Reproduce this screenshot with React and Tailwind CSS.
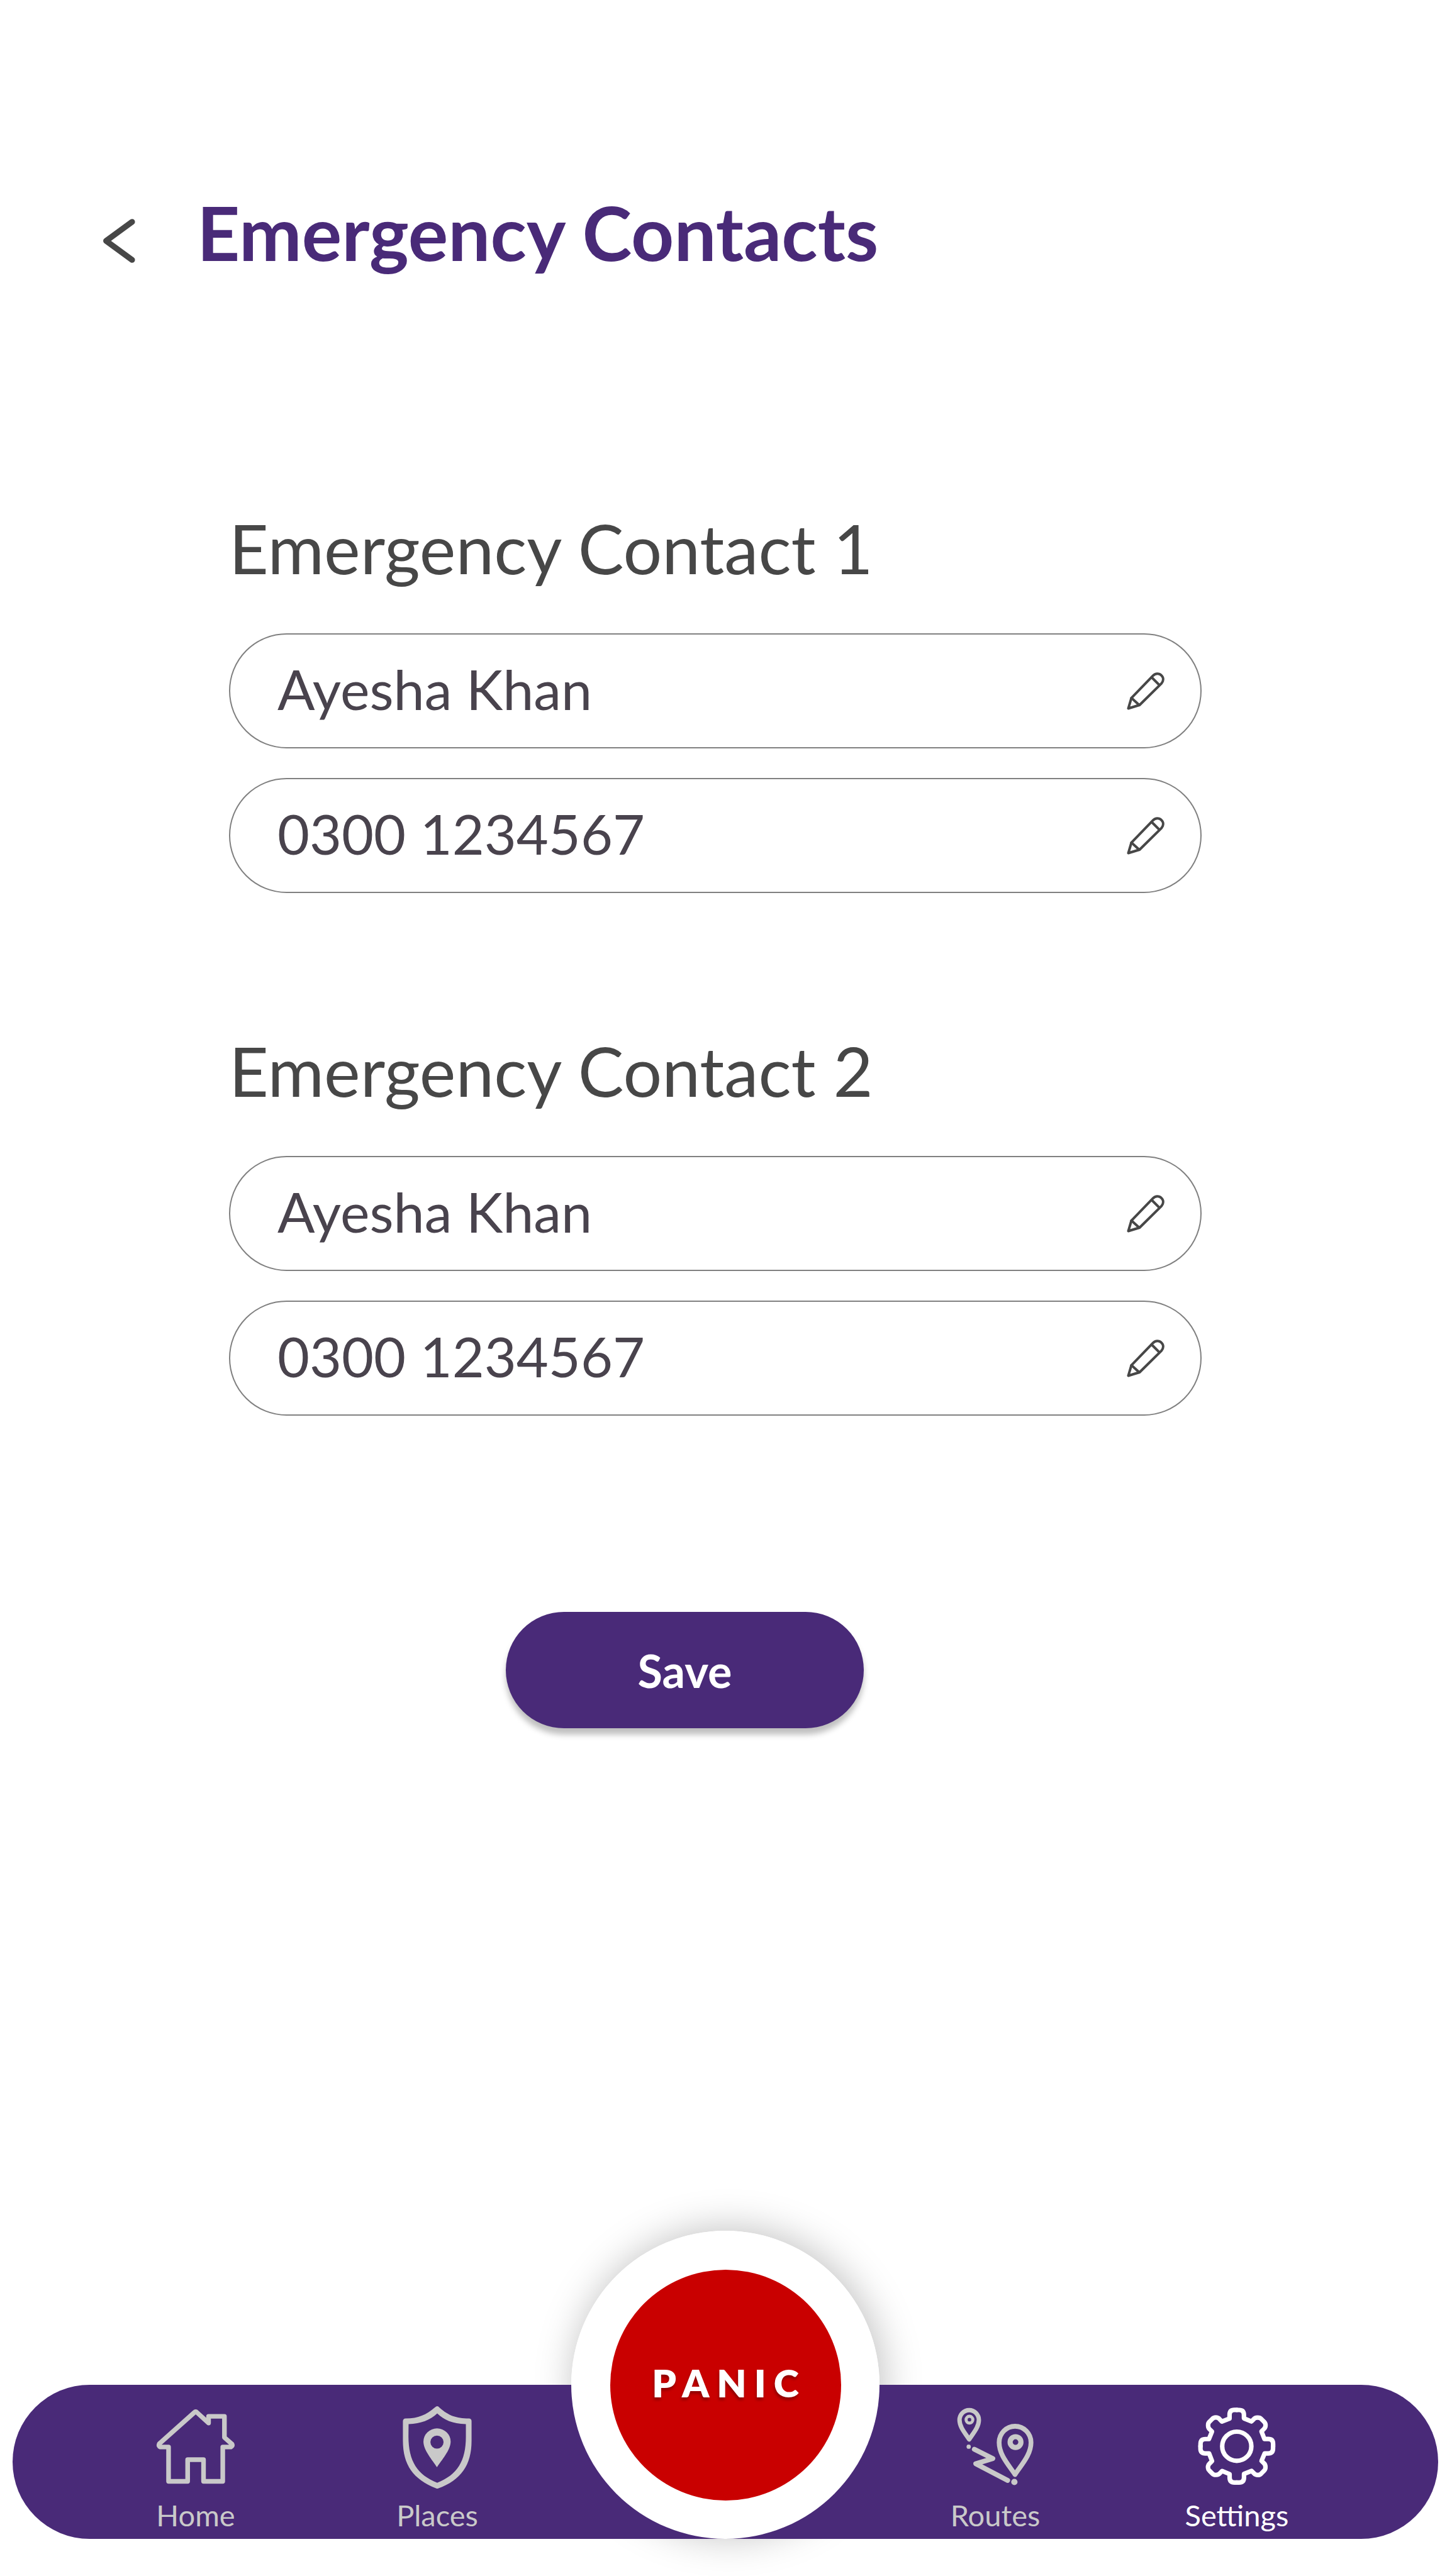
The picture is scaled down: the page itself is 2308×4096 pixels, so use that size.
import React, { useState } from "react";

const BackIcon = () => (
    <svg viewBox="260 560 90 120" className="w-14 h-[74px]" fill="none" stroke="currentColor" strokeWidth="15" strokeLinecap="round" strokeLinejoin="round">
        <path d="M339 571 L272 620 L339 669" />
    </svg>
);

const PencilIcon = () => (
    <svg viewBox="0 0 97 97" className="size-[60px]" fill="none" stroke="currentColor" strokeWidth="6.5" strokeLinecap="round" strokeLinejoin="round">
        <path d="M4 93 L12 66 L67 9 C74 2 83 2 89 8 C95 14 95 22 89 29 L33 84 Z" />
        <path d="M12 66 L32 84" />
        <path d="M64 13 L84 33" />
    </svg>
);

const HomeIcon = () => (
    <svg viewBox="15 0 720 780" className="w-[148px] h-[160px]" fill="none" stroke="currentColor" strokeWidth="36" strokeLinecap="round" strokeLinejoin="round">
        <path d="M165 370 V636 H313 V468 H436 V636 H585 V370 H648 Q664 362 657 348 L598 296 V132 H475 V184 L386 103 Q375 92 364 103 L93 345 Q84 364 102 370 Z" />
    </svg>
);

const PlacesIcon = () => (
    <svg viewBox="-15 0 720 780" className="w-[148px] h-[160px]" fill="currentColor" fillRule="evenodd">
        <path d="M345 54 C352 54 358 61 365 67 C435 128 490 147 590 149 Q611 150 611 170 V320 C611 510 530 625 352 691 Q345 693 338 691 C160 620 79 510 79 320 V170 Q80 150 100 149 C200 147 260 120 325 64 Q338 54 345 54 Z M345 110 C290 160 220 190 123 193 L122 290 C123 480 190 585 345 647 C500 585 567 480 567 290 V193 C460 190 400 160 345 110 Z" />
        <path d="M343 527 C310 475 238 395 238 328 A105.5 102 0 0 1 449 328 C449 395 376 475 343 527 Z M343 281 A51 51 0 1 0 343 383 A51 51 0 1 0 343 281 Z" />
    </svg>
);

const RoutesIcon = () => (
    <svg viewBox="-6 0 720 780" className="w-[148px] h-[160px]" fill="none" stroke="currentColor" strokeLinecap="round" strokeLinejoin="round">
        <path strokeWidth="34" d="M152 311 C120 262 77 215 77 161 A75 77 0 0 1 227 161 C227 215 184 262 152 311 Z" />
        <circle strokeWidth="24" cx="154" cy="158" r="26" />
        <path strokeWidth="37" d="M507 583 C455 505 384 430 384 335 A123.500 126 0 0 1 631 335 C631 430 559 505 507 583 Z" />
        <circle strokeWidth="40" cx="511" cy="332" r="42" />
        <path strokeWidth="38" d="M192 388 L335 459 L203 500 L450 629" />
        <circle cx="148" cy="368" r="16.5" fill="currentColor" stroke="none" />
        <circle cx="502" cy="641" r="24.5" fill="currentColor" stroke="none" />
    </svg>
);

// one quarter of the gear, repeated around the centre
const gearQuarter =
    "M358.500 83 H376 Q414 83 414 121 V148 L472 172 L490 154 C502 139 535 137 548 152 L570 174 C585 187 586 215 569 230 L550 249 L573 308 H602 Q640 308 640 346 V364";

const SettingsIcon = () => (
    <svg viewBox="-1 0 720 780" className="w-[148px] h-[160px]" fill="none" stroke="currentColor" strokeWidth="35" strokeLinecap="round" strokeLinejoin="round">
        <path d={gearQuarter} />
        <path d={gearQuarter} transform="rotate(90 358.5 364)" />
        <path d={gearQuarter} transform="rotate(180 358.5 364)" />
        <path d={gearQuarter} transform="rotate(270 358.5 364)" />
        <circle cx="358.5" cy="364" r="113" />
    </svg>
);

const NavItem = ({ icon, label, active }) => (
    <a
        href="#"
        aria-current={active ? "page" : undefined}
        className={`flex w-60 flex-col items-center text-[47px] leading-[48px] ${active ? "text-white" : "text-[#c9c9c9]"}`}
    >
        {icon}
        {label}
    </a>
);

const Field = ({ label, name, type, value, onChange }) => (
    <div className="flex h-[183px] items-center rounded-full border-2 border-[#808080] pr-[57px] pl-[75px]">
        <input
            type={type}
            name={name}
            aria-label={label}
            value={value}
            onChange={onChange}
            className="h-full min-w-0 flex-1 bg-transparent pb-2 text-[88px] text-[#49434d] focus:outline-none"
        />
        <button type="button" aria-label={`Edit ${label}`} className="text-[#474747]">
            <PencilIcon />
        </button>
    </div>
);

const App = () => {
    const [contacts, setContacts] = useState([
        { name: "Ayesha Khan", phone: "0300 1234567" },
        { name: "Ayesha Khan", phone: "0300 1234567" },
    ]);

    // Update a single field of one contact
    const handleChange = (index, e) => {
        const { name, value } = e.target;
        setContacts(contacts.map((c, i) => (i === index ? { ...c, [name]: value } : c)));
    };

    const handleSubmit = (e) => {
        e.preventDefault();
    };

    return (
        <div className="flex min-h-screen flex-col overflow-hidden bg-white font-['Lato',sans-serif]">
            <header className="flex items-center gap-24 pt-[297px] pl-[161px]">
                <button type="button" aria-label="Back" className="mt-7 text-[#474747]">
                    <BackIcon />
                </button>
                <h1 className="text-[119px] leading-[144px] font-bold text-[#492a78]">Emergency Contacts</h1>
            </header>

            <form onSubmit={handleSubmit} className="pt-[364px] pr-[398px] pl-[364px]">
                <div className="flex flex-col gap-[216px]">
                    {contacts.map((contact, index) => (
                        <section key={index}>
                            <h2 className="mb-[70px] text-[109px] leading-[132px] text-[#474747]">
                                Emergency Contact {index + 1}
                            </h2>
                            <div className="flex flex-col gap-[47px]">
                                <Field
                                    label={`Contact ${index + 1} name`}
                                    name="name"
                                    type="text"
                                    value={contact.name}
                                    onChange={(e) => handleChange(index, e)}
                                />
                                <Field
                                    label={`Contact ${index + 1} phone`}
                                    name="phone"
                                    type="tel"
                                    value={contact.phone}
                                    onChange={(e) => handleChange(index, e)}
                                />
                            </div>
                        </section>
                    ))}
                </div>
                <button
                    type="submit"
                    className="mt-[312px] ml-[440px] h-[185px] w-[569px] rounded-full bg-[#492a78] text-[72px] font-bold text-white shadow-[0_10px_10px_rgba(0,0,0,0.25)]"
                >
                    Save
                </button>
            </form>

            {/* Bottom navigation */}
            <div className="relative isolate mt-auto mr-[22px] mb-[59px] ml-5">
                {/* glow of the panic button, kept behind the bar */}
                <div className="absolute bottom-0 left-1/2 -z-10 size-[490px] -translate-x-1/2 rounded-full shadow-[5px_-3px_62px_rgba(0,0,0,0.25)]"></div>
                <nav className="flex h-[245px] justify-between rounded-full bg-[#492a78] pt-[23px] pr-[200px] pl-[171px]">
                    <div className="flex gap-36">
                        <NavItem icon={<HomeIcon />} label="Home" />
                        <NavItem icon={<PlacesIcon />} label="Places" />
                    </div>
                    <div className="flex gap-36">
                        <NavItem icon={<RoutesIcon />} label="Routes" />
                        <NavItem icon={<SettingsIcon />} label="Settings" active />
                    </div>
                </nav>
                <div className="absolute bottom-0 left-1/2 flex size-[490px] -translate-x-1/2 items-center justify-center rounded-full bg-white">
                    <button
                        type="button"
                        className="size-[367px] rounded-full bg-[#c90000] pb-1.5 pl-3 text-[61px] font-extrabold tracking-[12px] text-white [text-shadow:-1px_4px_4px_rgba(0,0,0,0.3)]"
                    >
                        PANIC
                    </button>
                </div>
            </div>
        </div>
    );
};

export default App;
